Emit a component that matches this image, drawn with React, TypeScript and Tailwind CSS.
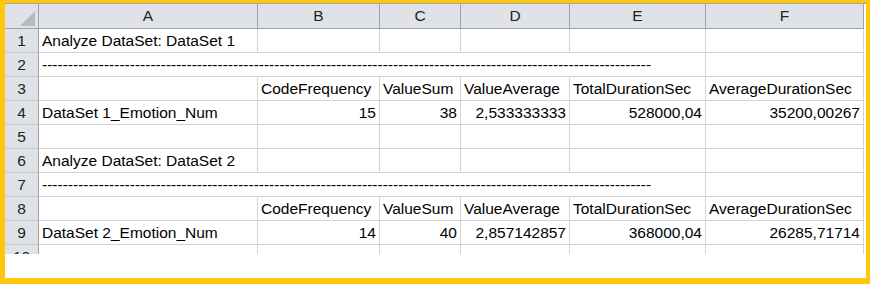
const columns = ["A", "B", "C", "D", "E", "F"];

type Cell = { text?: string; right?: boolean; span?: number };

const dashes = "-".repeat(118);

const headerRow: Cell[] = [
  {},
  { text: "CodeFrequency" },
  { text: "ValueSum" },
  { text: "ValueAverage" },
  { text: "TotalDurationSec" },
  { text: "AverageDurationSec" },
];

const blankRow: Cell[] = [{}, {}, {}, {}, {}, {}];

const rows: Cell[][] = [
  [{ text: "Analyze DataSet: DataSet 1" }, {}, {}, {}, {}, {}],
  [{ text: dashes, span: 5 }, {}],
  headerRow,
  [
    { text: "DataSet 1_Emotion_Num" },
    { text: "15", right: true },
    { text: "38", right: true },
    { text: "2,533333333", right: true },
    { text: "528000,04", right: true },
    { text: "35200,00267", right: true },
  ],
  blankRow,
  [{ text: "Analyze DataSet: DataSet 2" }, {}, {}, {}, {}, {}],
  [{ text: dashes, span: 5 }, {}],
  headerRow,
  [
    { text: "DataSet 2_Emotion_Num" },
    { text: "14", right: true },
    { text: "40", right: true },
    { text: "2,857142857", right: true },
    { text: "368000,04", right: true },
    { text: "26285,71714", right: true },
  ],
  blankRow,
];

const spanClass: Record<number, string> = {
  1: "col-span-1",
  5: "col-span-5",
};

export default function App() {
  return (
    <div className="h-[284px] w-[870px] bg-[#ffc60b] pt-[3px] pl-[5px] pr-[4px] pb-[6px]">
      <div className="h-full w-full bg-white">
        <div
          className="h-[251px] overflow-hidden border-t border-[#9fa2a6] text-[15.5px] text-black"
          style={{ fontFamily: '"Liberation Sans", Arial, sans-serif' }}
        >
          <div className="grid grid-cols-[34px_219px_122px_81px_109px_136px_158px]">
            {/* column headers */}
            <div className="flex h-[25px] items-end justify-end border-r border-b border-[#9fa2a6] bg-[#dfe3e8] pr-[3px] pb-[2px]">
              <svg width="15" height="15" viewBox="0 0 15 15">
                <path d="M15 0 L15 15 L0 15 Z" fill="#b7bbc0" />
              </svg>
            </div>
            {columns.map((c) => (
              <div
                key={c}
                className="flex h-[25px] items-center justify-center border-r border-b border-[#9fa2a6] bg-[#dfe3e8] text-[#222]"
              >
                {c}
              </div>
            ))}

            {rows.map((row, i) => (
              <div key={i} className="contents">
                <div className="flex h-[24px] items-center justify-center border-r border-b border-r-[#9fa2a6] border-b-[#c6c9cd] bg-[#dfe3e8] text-[#222]">
                  {i + 1}
                </div>
                {row.map((cell, j) => (
                  <div
                    key={j}
                    className={`flex h-[24px] items-center overflow-visible whitespace-nowrap border-r border-b border-[#d4d4d4] px-[3px] ${
                      cell.right ? "justify-end" : "justify-start"
                    } ${spanClass[cell.span ?? 1]}`}
                  >
                    {cell.text}
                  </div>
                ))}
              </div>
            ))}
          </div>
        </div>
      </div>
    </div>
  );
}
